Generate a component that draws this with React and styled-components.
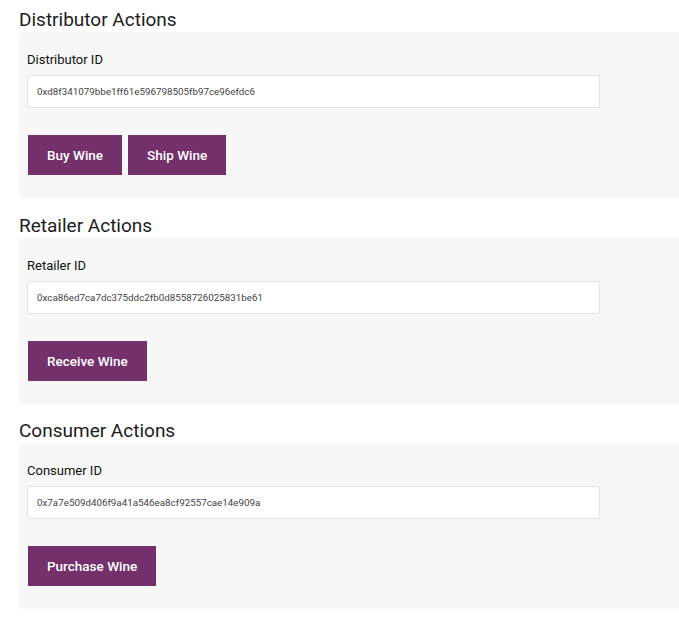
import React from "react";
import styled, { createGlobalStyle } from "styled-components";

const GlobalStyle = createGlobalStyle`
  html, body {
    margin: 0;
    padding: 0;
    background: #ffffff;
    overflow-x: hidden;
  }
  body {
    font-family: Roboto, "Liberation Sans", sans-serif;
    color: #222222;
  }
`;

const sections = [
  {
    title: "Distributor Actions",
    label: "Distributor ID",
    value: "0xd8f341079bbe1ff61e596798505fb97ce96efdc6",
    buttons: ["Buy Wine", "Ship Wine"],
  },
  {
    title: "Retailer Actions",
    label: "Retailer ID",
    value: "0xca86ed7ca7dc375ddc2fb0d8558726025831be61",
    buttons: ["Receive Wine"],
  },
  {
    title: "Consumer Actions",
    label: "Consumer ID",
    value: "0x7a7e509d406f9a41a546ea8cf92557cae14e909a",
    buttons: ["Purchase Wine"],
  },
];

const App = () => {
  return (
    <Page>
      <GlobalStyle />
      {sections.map((s) => (
        <Section key={s.title}>
          <Heading>{s.title}</Heading>
          <Panel>
            <Label>{s.label}</Label>
            <IdInput type="text" defaultValue={s.value} readOnly />
            <ButtonRow>
              {s.buttons.map((b) => (
                <ActionButton key={b}>{b}</ActionButton>
              ))}
            </ButtonRow>
          </Panel>
        </Section>
      ))}
    </Page>
  );
};

const Page = styled.div`
  padding: 8px 0 0 19px;
  display: flex;
  flex-direction: column;
  gap: 15.5px;
`;

const Section = styled.section`
  display: flex;
  flex-direction: column;
`;

const Heading = styled.h2`
  margin: 0;
  font-size: 19px;
  line-height: 24px;
  font-weight: 400;
  color: #1c1c1c;
`;

const Panel = styled.div`
  background: #f7f7f7;
  border-radius: 4px 0 0 4px;
  margin-right: -10px;
  padding: 19px 8px 23px 8px;
  display: flex;
  flex-direction: column;
`;

const Label = styled.label`
  font-size: 13px;
  line-height: 17px;
  color: #111111;
  margin-bottom: 7px;
`;

const IdInput = styled.input`
  box-sizing: border-box;
  width: 573px;
  height: 33px;
  border: 1px solid #e2e2e2;
  background: #ffffff;
  padding: 0 9px;
  font-family: Roboto, "Liberation Sans", sans-serif;
  font-size: 9.8px;
  color: #444444;
  outline: none;
`;

const ButtonRow = styled.div`
  display: flex;
  gap: 6px;
  margin-top: 27px;
  padding-left: 1px;
`;

const ActionButton = styled.button`
  height: 40px;
  padding: 0 19px;
  border: none;
  border-radius: 0;
  background: #74306b;
  color: #ffffff;
  font-family: Roboto, "Liberation Sans", sans-serif;
  font-size: 13.5px;
  font-weight: 500;
  cursor: pointer;
`;

export default App;
